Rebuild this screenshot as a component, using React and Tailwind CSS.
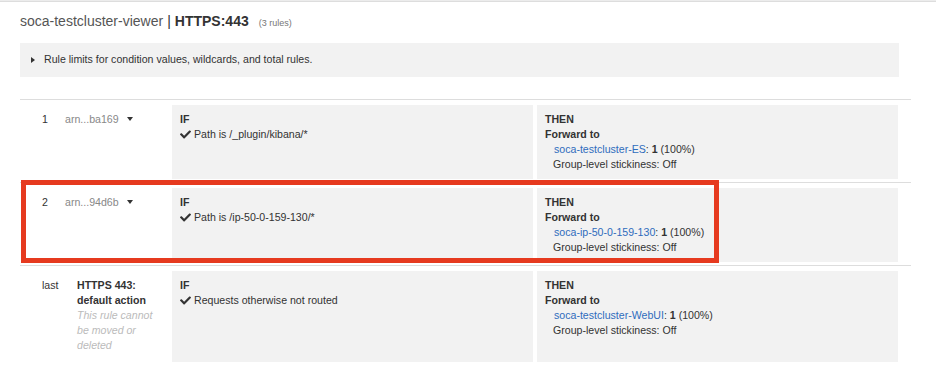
import React from 'react';

const Check = () => (
  <svg viewBox="0 0 512 512" className="w-[11px] h-[11px] mr-[3px] shrink-0 fill-[#333]">
    <path d="M173.9 439.4l-166.4-166.4c-10-10-10-26.2 0-36.2l36.2-36.2c10-10 26.2-10 36.2 0L192 312.7 432.1 72.6c10-10 26.2-10 36.2 0l36.2 36.2c10 10 10 26.2 0 36.2l-294.4 294.4c-10 10-26.2 10-36.2 0z" />
  </svg>
);

const Caret = () => (
  <span className="inline-block ml-[8px] w-0 h-0 border-x-[3.5px] border-x-transparent border-t-[4px] border-t-[#333] align-middle mb-[2px]"></span>
);

const IfCell = ({ text }) => (
  <div className="w-[361px] bg-[#f2f2f2] pl-[8px] pt-[7px] pb-[7px]">
    <div className="font-bold">IF</div>
    <div className="flex items-center">
      <Check />
      <span>{text}</span>
    </div>
  </div>
);

const ThenCell = ({ target }) => (
  <div className="w-[361px] ml-[4px] bg-[#f2f2f2] pl-[8px] pt-[7px] pb-[7px]">
    <div className="font-bold">THEN</div>
    <div className="font-bold">Forward to</div>
    <div className="pl-[9px]">
      <span className="text-[#2f6cbd]">{target}</span>
      <span>: </span>
      <span className="font-bold">1</span>
      <span> (100%)</span>
    </div>
    <div className="pl-[8px]">Group-level stickiness: Off</div>
  </div>
);

const rules = [
  { num: '1', arn: 'arn...ba169', path: 'Path is /_plugin/kibana/*', target: 'soca-testcluster-ES' },
  { num: '2', arn: 'arn...94d6b', path: 'Path is /ip-50-0-159-130/*', target: 'soca-ip-50-0-159-130', marked: true },
];

const App = () => {
  return (
    <div className="w-[936px] h-[391px] overflow-hidden bg-white text-[#333] font-['Liberation_Sans',Arial,sans-serif]">
      <div className="h-[2px] bg-[#ececec] border-b border-[#dddddd]"></div>

      <div className="pl-[20px] pt-[11px]">
        {/* heading */}
        <div className="flex items-baseline h-[17px] text-[14px] leading-[17px]">
          <span className="text-[#555]">soca-testcluster-viewer</span>
          <span className="text-[#333] mx-[4px]">|</span>
          <span className="font-bold text-[#333]">HTTPS:443</span>
          <span className="ml-[10px] text-[9px] text-[#777]">(3 rules)</span>
        </div>

        <div className="mt-[13px] w-[879px] h-[34px] bg-[#f2f2f2] flex items-center pl-[11px] text-[10.6px]">
          <span className="w-0 h-0 border-y-[3.5px] border-y-transparent border-l-[4px] border-l-[#333] mr-[9px]"></span>
          <span>Rule limits for condition values, wildcards, and total rules.</span>
        </div>

        {/* rules table */}
        <div className="mt-[22px] w-[891px] text-[10.6px] leading-[15px]">
          {rules.map((r) => (
            <div key={r.num} className="relative border-t border-[#dddddd] flex pt-[5px] pb-[3px]">
              <div className="w-[45px] pl-[22px] pt-[7px]">{r.num}</div>
              <div className="w-[107px] pt-[7px] text-[#888]">
                {r.arn}
                <Caret />
              </div>
              <IfCell text={r.path} />
              <ThenCell target={r.target} />
              {r.marked && (
                <div className="absolute top-[-3px] left-[1px] w-[698px] h-[83px] border-[5px] border-[#e63a1f]"></div>
              )}
            </div>
          ))}

          <div className="border-t border-[#dddddd] flex pt-[5px]">
            <div className="w-[45px] pl-[22px] pt-[7px]">last</div>
            <div className="w-[107px] pl-[12px] pt-[7px] pb-[9px]">
              <div className="font-bold">HTTPS 443:</div>
              <div className="font-bold">default action</div>
              <div className="italic text-[#bbb]">
                This rule cannot
                <br />
                be moved or
                <br />
                deleted
              </div>
            </div>
            <IfCell text="Requests otherwise not routed" />
            <ThenCell target="soca-testcluster-WebUI" />
          </div>
        </div>
      </div>
    </div>
  );
};

export default App;
